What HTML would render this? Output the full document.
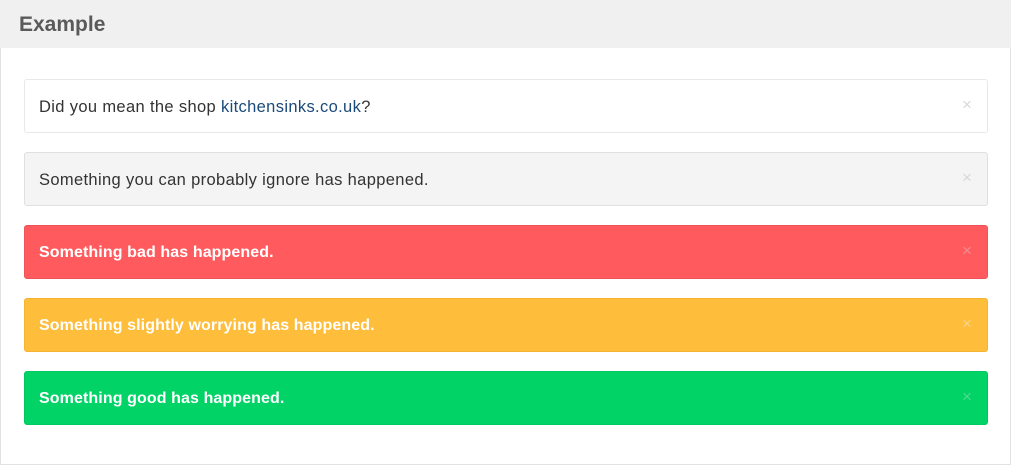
<!DOCTYPE html>
<html><head><style>
html,body{margin:0;padding:0;background:#fff}
body{width:1011px;height:466px;position:relative;overflow:hidden;font-family:"Liberation Sans",sans-serif}
.frame{position:absolute;left:0;top:0;width:1009px;height:464px;border:1px solid #e2e2e2;border-top:none}
.hd{position:absolute;left:0;top:0;width:1011px;height:48px;background:#f0f0f0;}
.hd span{position:absolute;left:19px;top:13px;font-size:21px;font-weight:bold;color:#5a5a5a}
.a{position:absolute;left:24px;width:962px;height:52px;border:1px solid #e8e8e8;border-radius:3px;box-sizing:content-box}
.a span.t{position:absolute;left:14px;top:18px;font-size:16.5px;letter-spacing:0.35px;color:#333}
.a span.x{position:absolute;left:937px;top:15px;font-size:17px;color:#d8d8d8}
.w span.t{color:#fff;font-weight:bold;font-size:16px;letter-spacing:0.1px;top:18px}
</style></head><body>
<div class="frame"></div>
<div class="hd"><span>Example</span></div>
<div class="a" style="top:79px;background:#fff"><span class="t">Did you mean the shop <span style="color:#1b4a7a">kitchensinks.co.uk</span>?</span><span class="x">×</span></div>
<div class="a" style="top:152px;background:#f4f4f4;border-color:#e0e0e0"><span class="t">Something you can probably ignore has happened.</span><span class="x">×</span></div>
<div class="a w" style="top:225px;background:#ff5b5f;border-color:#f0545a"><span class="t">Something bad has happened.</span><span class="x" style="color:#f08c8e">×</span></div>
<div class="a w" style="top:298px;background:#febd3a;border-color:#f5b431"><span class="t">Something slightly worrying has happened.</span><span class="x" style="color:#f9d38a">×</span></div>
<div class="a w" style="top:371px;background:#01d367;border-color:#00c85f"><span class="t">Something good has happened.</span><span class="x" style="color:#4fd98e">×</span></div>
</body></html>
